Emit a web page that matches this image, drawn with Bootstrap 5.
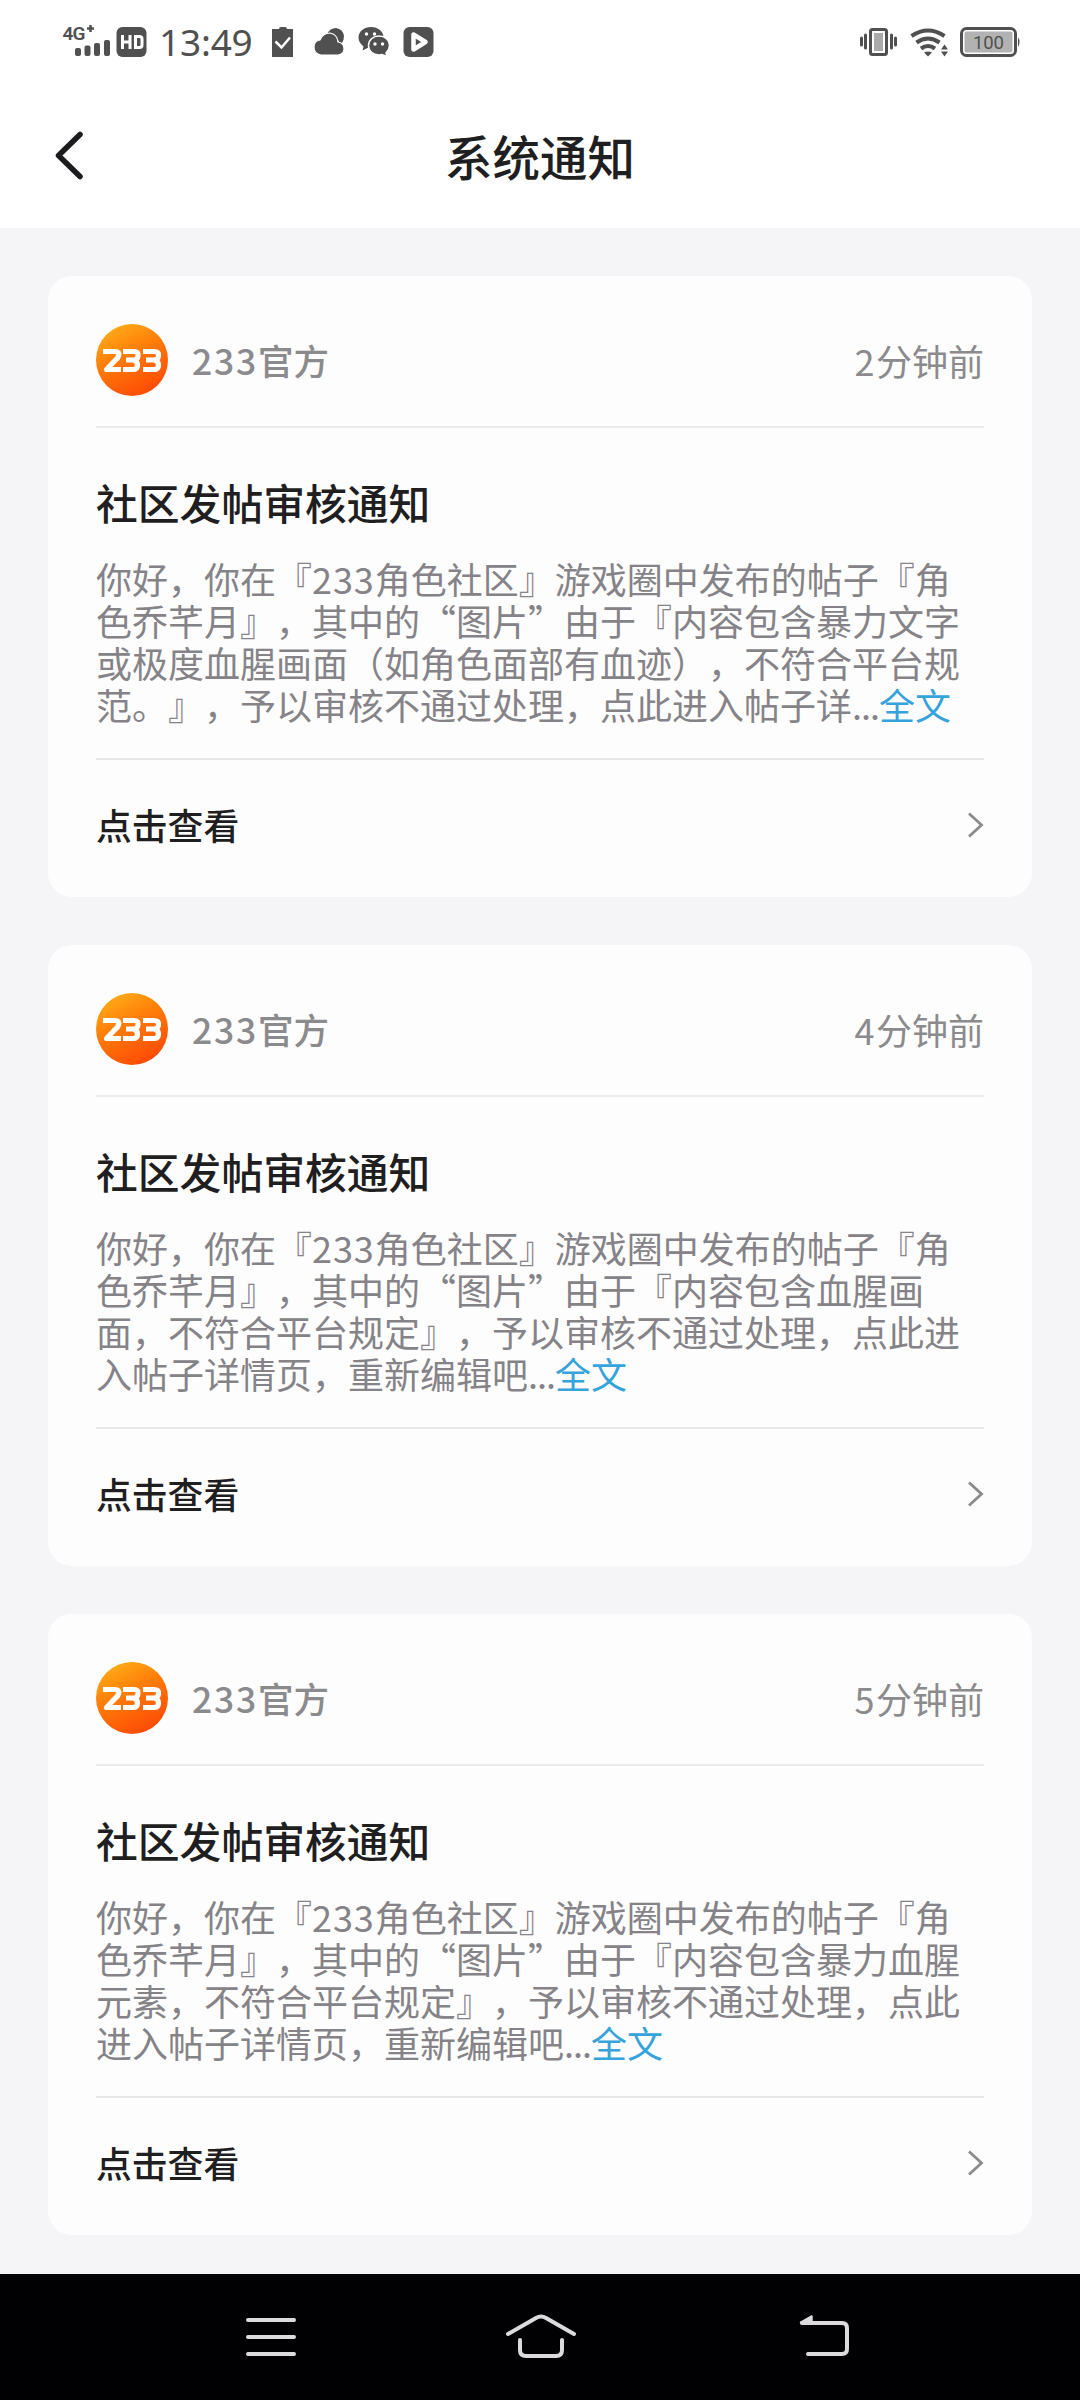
<!DOCTYPE html>
<html lang="zh-CN">
<head>
<meta charset="utf-8">
<meta name="viewport" content="width=device-width, initial-scale=1">
<title>系统通知</title>
<link href="https://cdn.jsdelivr.net/npm/bootstrap@5.3.0/dist/css/bootstrap.min.css" rel="stylesheet">
<style>
body{background:#f5f4f6;font-family:"Noto Sans CJK SC",sans-serif;color:#1f1e20;text-spacing-trim:space-all;height:2400px}
svg{display:block;flex:none}
.status-bar{height:84px;padding:0 58px 0 58px;color:#505050;fill:#505050}
.clock{font:400 37px/40px "Noto Sans",sans-serif;letter-spacing:-.2px;width:96px;margin:0 16px 0 11px}
.title-bar{height:144px;padding-left:54px;padding-right:54px}
.page-title{font-size:47.5px;line-height:60px;font-weight:500;padding-bottom:1px}
.side{width:32px}
.feed{padding:48px;gap:48px}
.notice{height:621px;border:0;border-radius:24px;background:#fefdfe;padding:0 48px}
.notice-head{height:152px;padding-top:48px;border-bottom:2px solid #ebebed}
.sender{font-size:35.5px;line-height:72px;font-weight:500;color:#8b8a8c;margin-left:24px}
.num{letter-spacing:1.8px}
.when{font-size:36px;line-height:72px;color:#8b8a8c}
.lead-digit{letter-spacing:1.5px}
.in-digits{letter-spacing:.9px}
.notice-title{font-size:41.8px;line-height:60px;font-weight:500;margin:44px 0 25px}
.notice-text{font-size:36px;line-height:42px;height:203px;color:#858387;margin:0;white-space:nowrap;border-bottom:2px solid #e8e8ea}
.dots{letter-spacing:-1px}
.more{color:#36a3da;text-decoration:none}
.notice-foot{color:#1f1e20;text-decoration:none;font-size:35.8px;font-weight:500;height:129px}
.nav-keys{height:126px;background:#010003;margin-top:-9px}
</style>
</head>
<body>
<svg width="0" height="0" class="position-absolute"><defs>
<linearGradient id="org" x1=".15" y1="0" x2=".65" y2="1"><stop offset="0" stop-color="#ffb21a"/><stop offset=".45" stop-color="#ff7d09"/><stop offset="1" stop-color="#fd4a05"/></linearGradient>
<symbol id="logo" viewBox="0 0 72 72"><circle cx="36" cy="36" r="36" fill="url(#org)"/>
<g fill="none" stroke="#fff" stroke-width="5.200" stroke-linejoin="round"><path d="M7 27.500H19q5 0 3.500 4.500q-.5 2-3 4L10.500 45.500H25"/><path d="M27 27.500H38q5 0 4 4.500q-.5 4-4.500 4H30M37 36.500q4.500 0 4.500 4.500t-4.500 4.500H27"/><path d="M47 27.500H58q5.500 0 4.500 4.500q-.5 4-4.500 4H50M58 36.500q4.500 0 4.500 4.500t-4.500 4.500H47"/></g></symbol>
<symbol id="go" viewBox="0 0 18 28"><path d="M3 2.500l12.500 11.500L3 25.500" fill="none" stroke="#8b8a8c" stroke-width="2.800"/></symbol>
</defs></svg>

<div class="bg-white">
<div class="status-bar d-flex align-items-center justify-content-between">
  <div class="d-flex align-items-center">
    <svg width="54" height="48" viewBox="58 18 54 48"><text x="62.500" y="39.500" font-family="Roboto" font-weight="600" font-size="19" textLength="23">4G</text><path d="M87 28.500h7M90.500 25v7" stroke="#505050" stroke-width="2.500"/><rect x="75" y="48" width="6" height="8" rx="2"/><rect x="84.500" y="45.500" width="6" height="10.500" rx="2"/><rect x="94" y="43" width="6" height="13" rx="2"/><rect x="104" y="40" width="6" height="16" rx="2"/></svg>
    <svg class="ms-1" width="32" height="36" viewBox="116 24 32 36"><rect x="116.500" y="27" width="30" height="30" rx="6"/><path d="M122.500 35v14M130 35v14M122.500 42h7M135.500 36.500h4q2.500 0 2.500 2.500v6q0 2.500-2.500 2.500h-4z" fill="none" stroke="#fff" stroke-width="3"/></svg>
    <span class="clock">13:49</span>
    <svg width="182" height="36" viewBox="270 24 182 36">
      <path d="M271 29h7q0-2 2-2h4q2 0 2 2h6v28h-21z"/><path d="M274.500 41.500l6 6 8.500-10" fill="none" stroke="#fff" stroke-width="2.500"/>
      <path d="M326 34q3-6 9-6 7 1 8 8 0 4-2 7l-3-1q-2-7-12-8z"/><path d="M320 55q-7-1-7-8 0-6 6-7 3-7 10-7 7 1 8 9 6 1 6 7 0 5-6 6z" stroke="#fff" stroke-width="1.200"/>
      <path d="M370 27c-7 0-12.500 4.500-12.500 10.500 0 4 2 6.500 5 9l-1 4 5-2.500h4c7 0 12-4.500 12-10.500s-5.500-10.500-12.500-10.500z"/><path d="M378 36c-6 0-10.500 4-10.500 9.500s4.500 9.500 10.500 9.500c1.500 0 2 0 3-.5l5 2-1-3.500c2-2 3.500-4 3.500-7.500 0-5.500-4.500-9.500-10.500-9.500z" stroke="#fff" stroke-width="1.500"/><g fill="#fff"><circle cx="365.500" cy="34" r="1.700"/><circle cx="373.500" cy="34" r="1.700"/><circle cx="374" cy="44" r="1.700"/><circle cx="381.500" cy="44" r="1.700"/></g>
      <rect x="402.500" y="27" width="30" height="30" rx="6"/><path d="M412.500 34.500v15l12-7.500z" fill="none" stroke="#fff" stroke-width="4.500" stroke-linejoin="round"/>
    </svg>
  </div>
  <svg width="164" height="40" viewBox="858 22 164 40">
    <path d="M861.500 38v7M865.500 35v13M891.500 35v13M895.500 38v7" stroke="#505050" stroke-width="3" stroke-linecap="round"/><rect x="870.500" y="29.500" width="16" height="25" rx="2" fill="#fff" stroke="#505050" stroke-width="3"/><rect x="874" y="33" width="9" height="18" fill="#aaa"/>
    <g fill="none" stroke="#505050" stroke-width="4"><path d="M911.500 36q16.500-11 33 0M916.500 42.500q11.500-8 23 0M921 48.500q7-5 14 0"/></g><path d="M924 52.500q4-2 8 0l-4 4zM941 49.500l3.500-5 3.500 5zM941 51.500h7l-3.500 5z"/>
    <rect x="961.500" y="28.500" width="54" height="27" rx="5" fill="#fff" stroke="#505050" stroke-width="3"/><rect x="964.500" y="31.500" width="48" height="21" rx="2" fill="#b2b2b2"/><path d="M1018 37q3 5 0 10z"/><text x="988.500" y="49" font-family="Roboto" font-size="18.500" text-anchor="middle" textLength="31">100</text>
  </svg>
</div>
<header class="title-bar d-flex align-items-center justify-content-between">
  <svg class="side" height="52" viewBox="54 130 32 52"><path d="M80 134.500L58.500 155.500 80 176.500" fill="none" stroke="#1c1b1d" stroke-width="5.500" stroke-linecap="round" stroke-linejoin="round"/></svg>
  <h1 class="page-title m-0">系统通知</h1><span class="side"></span>
</header>
</div>

<main class="feed d-flex flex-column">
<article class="card notice">
  <div class="notice-head d-flex"><svg width="72" height="72"><use href="#logo"/></svg><span class="sender"><span class="num">233</span>官方</span><span class="when ms-auto"><span class="lead-digit">2</span>分钟前</span></div>
  <h2 class="notice-title">社区发帖审核通知</h2>
  <p class="notice-text">你好，你在『<span class="in-digits">233</span>角色社区』游戏圈中发布的帖子『角<br>色乔芊月』，其中的“图片”由于『内容包含暴力文字<br>或极度血腥画面（如角色面部有血迹），不符合平台规<br>范。』，予以审核不通过处理，点此进入帖子详<span class="dots">...</span><a class="more" href="#">全文</a></p>
  <a href="#" class="notice-foot d-flex align-items-center justify-content-between">点击查看<svg width="18" height="28"><use href="#go"/></svg></a>
</article>
<article class="card notice">
  <div class="notice-head d-flex"><svg width="72" height="72"><use href="#logo"/></svg><span class="sender"><span class="num">233</span>官方</span><span class="when ms-auto"><span class="lead-digit">4</span>分钟前</span></div>
  <h2 class="notice-title">社区发帖审核通知</h2>
  <p class="notice-text">你好，你在『<span class="in-digits">233</span>角色社区』游戏圈中发布的帖子『角<br>色乔芊月』，其中的“图片”由于『内容包含血腥画<br>面，不符合平台规定』，予以审核不通过处理，点此进<br>入帖子详情页，重新编辑吧<span class="dots">...</span><a class="more" href="#">全文</a></p>
  <a href="#" class="notice-foot d-flex align-items-center justify-content-between">点击查看<svg width="18" height="28"><use href="#go"/></svg></a>
</article>
<article class="card notice">
  <div class="notice-head d-flex"><svg width="72" height="72"><use href="#logo"/></svg><span class="sender"><span class="num">233</span>官方</span><span class="when ms-auto"><span class="lead-digit">5</span>分钟前</span></div>
  <h2 class="notice-title">社区发帖审核通知</h2>
  <p class="notice-text">你好，你在『<span class="in-digits">233</span>角色社区』游戏圈中发布的帖子『角<br>色乔芊月』，其中的“图片”由于『内容包含暴力血腥<br>元素，不符合平台规定』，予以审核不通过处理，点此<br>进入帖子详情页，重新编辑吧<span class="dots">...</span><a class="more" href="#">全文</a></p>
  <a href="#" class="notice-foot d-flex align-items-center justify-content-between">点击查看<svg width="18" height="28"><use href="#go"/></svg></a>
</article>
</main>

<nav class="nav-keys">
<svg width="1080" height="126" viewBox="0 2274 1080 126" fill="none" stroke="#dcdadd" stroke-width="4" stroke-linecap="round" stroke-linejoin="round">
<path d="M248 2320H294M248 2337H294M248 2354H294"/>
<path d="M508 2334L536 2318Q541 2315 546 2318L574 2334M520 2340V2350Q520 2356 526 2356H556Q562 2356 562 2350V2340"/>
<path d="M802 2323H842Q847 2323 847 2328V2349Q847 2354 842 2354H808"/><path d="M801 2322.500L811.500 2316.500V2323z" fill="#dcdadd" stroke-width="2.500"/>
</svg>
</nav>
<script src="https://cdn.jsdelivr.net/npm/bootstrap@5.3.0/dist/js/bootstrap.bundle.min.js"></script>
</body>
</html>
